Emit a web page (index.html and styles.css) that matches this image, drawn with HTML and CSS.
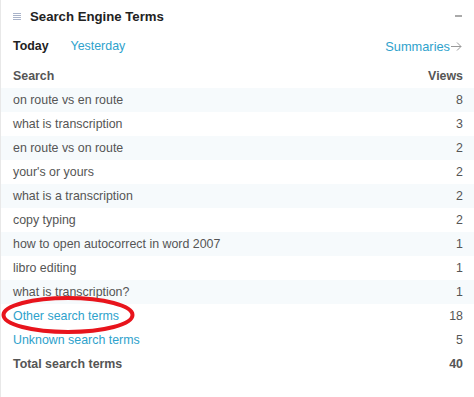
FILE: index.html
```html
<!DOCTYPE html>
<html lang="en">
<head>
    <meta charset="UTF-8">
    <meta name="viewport" content="width=device-width, initial-scale=1.0">
    <title>Search Engine Terms</title>
    <link rel="stylesheet" href="styles.css">
</head>
<body>
    <div class="widget">
        <div class="widget-head">
            <span class="handle">
                <svg width="8" height="8" viewBox="0 0 8 8"><path d="M0 1.5h8M0 3.5h8M0 5.5h8M0 7.5h8" stroke="#a9b3c9" stroke-width="1"/></svg>
            </span>
            <h2 class="title">Search Engine Terms</h2>
            <span class="toggle"></span>
        </div>
        <div class="tabs">
            <span class="tab active">Today</span>
            <a class="tab" href="#">Yesterday</a>
            <a class="summaries" href="#">Summaries<svg class="arrow" width="11" height="9" viewBox="0 0 11 9"><path d="M0 4.5h10M6 0.5L10 4.5L6 8.5" fill="none" stroke="#999" stroke-width="1"/></svg></a>
        </div>
        <table class="terms">
            <thead>
                <tr><th>Search</th><th class="num">Views</th></tr>
            </thead>
            <tbody>
                <tr class="alt"><td>on route vs en route</td><td class="num">8</td></tr>
                <tr><td>what is transcription</td><td class="num">3</td></tr>
                <tr class="alt"><td>en route vs on route</td><td class="num">2</td></tr>
                <tr><td>your's or yours</td><td class="num">2</td></tr>
                <tr class="alt"><td>what is a transcription</td><td class="num">2</td></tr>
                <tr><td>copy typing</td><td class="num">2</td></tr>
                <tr class="alt"><td>how to open autocorrect in word 2007</td><td class="num">1</td></tr>
                <tr><td>libro editing</td><td class="num">1</td></tr>
                <tr class="alt"><td>what is transcription?</td><td class="num">1</td></tr>
                <tr><td><a href="#">Other search terms</a></td><td class="num">18</td></tr>
                <tr><td><a href="#">Unknown search terms</a></td><td class="num">5</td></tr>
                <tr class="total"><td>Total search terms</td><td class="num">40</td></tr>
            </tbody>
        </table>
        <svg class="circle" width="140" height="42" viewBox="0 0 140 42">
            <ellipse cx="67" cy="21" rx="64.5" ry="17" fill="none" stroke="#e8141c" stroke-width="4"/>
        </svg>
    </div>
</body>
</html>
```

FILE: styles.css
```css
body {
    margin: 0;
    background: #fff;
    font-family: "Liberation Sans", Arial, sans-serif;
    font-size: 12.4px;
    color: #555;
}
.widget {
    position: relative;
    height: 397px;
    border-left: 1px solid #e8e8e8;
}
.widget-head {
    display: flex;
    align-items: center;
    height: 32px;
    padding: 0 12px 0 12px;
}
.handle {
    display: flex;
    width: 8px;
    margin-right: 9px;
}
.title {
    flex: 1;
    margin: 0;
    font-size: 13.2px;
    font-weight: bold;
    color: #222;
}
.toggle {
    width: 7px;
    height: 2px;
    background: #aaa;
}
.tabs {
    display: flex;
    align-items: center;
    height: 26px;
    margin-top: 1px;
    padding: 0 12px;
}
.tab {
    margin-right: 22px;
    color: #2ea2cc;
    text-decoration: none;
}
.tab.active {
    color: #222;
    font-weight: bold;
}
.summaries {
    display: flex;
    align-items: center;
    margin-left: auto;
    font-size: 12.8px;
    color: #2ea2cc;
    text-decoration: none;
}
.arrow {
    margin-left: 1px;
}
.terms {
    width: 100%;
    border-collapse: collapse;
    margin-top: 5px;
}
.terms th,
.terms td {
    height: 24px;
    padding: 0 11px 0 12px;
    text-align: left;
}
.terms th {
    font-weight: bold;
    color: #555;
}
.terms .num {
    text-align: right;
}
.terms tr.alt td {
    background: #f6fafc;
}
.terms a {
    color: #2ea2cc;
    text-decoration: none;
}
.terms tr.total td {
    font-weight: bold;
}
.circle {
    position: absolute;
    left: 0;
    top: 294px;
}
```
